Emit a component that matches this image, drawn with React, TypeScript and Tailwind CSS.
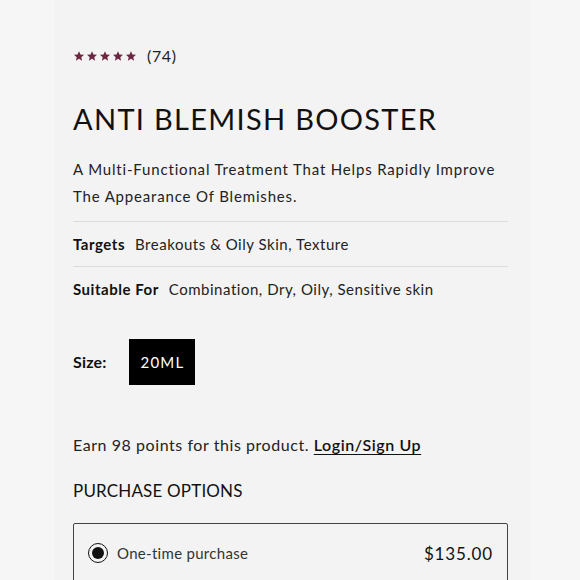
import React from 'react';

function Stars() {
    return (
        <div className="flex items-center gap-[1px] text-[#6d2743]">
            {[0, 1, 2, 3, 4].map((i) => (
                <svg key={i} viewBox="0 0 24 24" className="h-[12px] w-[12px]" fill="currentColor">
                    <path d="M12 2.5l2.9 6.6 7.1.6-5.4 4.7 1.6 7-6.2-3.7-6.2 3.7 1.6-7L2 9.7l7.1-.6z" />
                </svg>
            ))}
        </div>
    );
}

export default function App() {
    return (
        <div
            className="flex h-[580px] w-[580px] overflow-hidden bg-[#f6f6f6] text-[#111]"
            style={{ fontFamily: 'Lato, "Noto Sans", sans-serif' }}
        >
            <div className="ml-[55px] w-[475px] bg-[#f3f3f3] pl-[18px] pr-[22px] pt-[44px]">
                <div className="flex items-center gap-[10px]">
                    <Stars />
                    <span className="text-[16px] tracking-[0.04em] text-[#222]">(74)</span>
                </div>

                <h1 className="mt-[31px] text-[29px] leading-[40px] font-normal tracking-[0.045em] text-[#111]">
                    ANTI BLEMISH BOOSTER
                </h1>

                <p className="mt-[17px] text-[15px] leading-[27px] tracking-[0.055em] text-[#222]">
                    A Multi-Functional Treatment That Helps Rapidly Improve The Appearance Of Blemishes.
                </p>

                <div className="mt-[11px] border-t border-[#dcdcdc]" />
                <div className="flex h-[44px] items-center gap-[10px] text-[15px] tracking-[0.035em]">
                    <span className="font-bold text-[#111]">Targets</span>
                    <span className="text-[#222]">Breakouts &amp; Oily Skin, Texture</span>
                </div>
                <div className="border-t border-[#dcdcdc]" />
                <div className="flex h-[44px] items-center gap-[10px] text-[15px] tracking-[0.035em]">
                    <span className="font-bold text-[#111]">Suitable For</span>
                    <span className="text-[#222]">Combination, Dry, Oily, Sensitive skin</span>
                </div>

                <div className="mt-[28px] flex items-center gap-[23px]">
                    <span className="text-[16px] font-bold tracking-[0.01em]">Size:</span>
                    <div className="flex h-[46px] w-[66px] items-center justify-center bg-black text-[15px] tracking-[0.08em] text-white">
                        20ML
                    </div>
                </div>

                <p className="mt-[48px] text-[16px] tracking-[0.035em] text-[#222]">
                    Earn 98 points for this product.{' '}
                    <span className="font-semibold text-[#111] underline underline-offset-[3px]">Login/Sign Up</span>
                </p>

                <h2 className="mt-[21px] text-[17px] tracking-[0.01em] text-[#111]">PURCHASE OPTIONS</h2>

                <div className="mt-[19px] h-[80px] rounded-[2px] border-[1.5px] border-[#444] px-[14px] pt-[17px]">
                    <div className="flex items-center">
                        <span className="flex h-[20px] w-[20px] items-center justify-center rounded-full border-[1.5px] border-[#111]">
                            <span className="h-[12px] w-[12px] rounded-full bg-[#111]" />
                        </span>
                        <span className="ml-[9px] text-[15px] tracking-[0.02em] text-[#333]">One-time purchase</span>
                        <span className="ml-auto text-[17px] tracking-[0.05em] text-[#111]">$135.00</span>
                    </div>
                </div>
            </div>
        </div>
    );
}
